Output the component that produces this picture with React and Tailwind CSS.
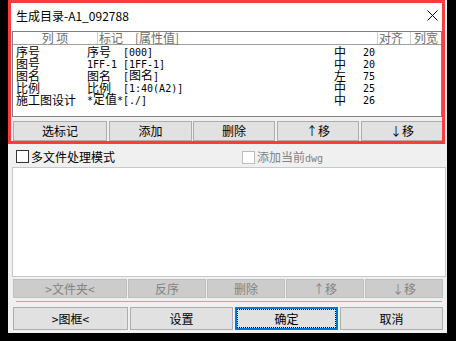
import React from "react";

const cjk = "font-['Noto_Sans_CJK_SC',sans-serif]";

function M({ children }) {
  return <span className="font-['DejaVu_Sans_Mono',monospace] text-[10px]">{children}</span>;
}

const rows = [
  { a: "序号", b: <>序号</>, c: <><M>[000]</M></>, d: "中", e: "20" },
  { a: "图号", b: <M>1FF-1</M>, c: <M>[1FF-1]</M>, d: "中", e: "20" },
  { a: "图名", b: <>图名</>, c: <><M>[</M>图名<M>]</M></>, d: "左", e: "75" },
  { a: "比例", b: <>比例</>, c: <M>[1:40(A2)]</M>, d: "中", e: "25" },
  { a: "施工图设计", b: <><M>*</M>定值<M>*</M></>, c: <M>[./]</M>, d: "中", e: "26" },
];

function Btn({ w, children, ml }) {
  return (
    <div className={`${w} ${ml} h-full bg-[#e1e1e1] border border-[#adadad] flex items-center justify-center text-[12px] text-black`}>
      {children}
    </div>
  );
}

function DBtn({ w, children, ml }) {
  return (
    <div className={`${w} ${ml} h-full bg-[#cccccc] border border-[#bfbfbf] flex items-center justify-center text-[12px] text-[#838383]`}>
      {children}
    </div>
  );
}

export default function App() {
  return (
    <div className={`relative w-[456px] h-[341px] bg-black overflow-hidden ${cjk} leading-[12px]`}>
      <div className="ml-[8px] w-[439px] h-[333px] bg-[#f0f0f0] flex flex-col">
        {/* title bar */}
        <div className="h-[31px] bg-white flex items-center justify-between pl-[8px] pr-[9px]">
          <span className="text-[12px] text-black">生成目录-A1_092788</span>
          <svg width="11" height="11" viewBox="0 0 11 11">
            <path d="M0.5 0.5 L10.5 10.5 M10.5 0.5 L0.5 10.5" stroke="#000" strokeWidth="1" />
          </svg>
        </div>
        {/* list panel */}
        <div className="ml-[4px] w-[430px] h-[86px] bg-white border border-[#828282] flex flex-col">
          <div className="h-[13px] flex border-b border-[#a0a0a0] text-[12px] text-[#6d6d6d]">
            <div className="w-[84px] flex items-center justify-center">列 项</div>
            <div className="w-px bg-[#d0d0d0]"></div>
            <div className="w-[279px] flex items-center pl-[1px]">
              <span>标记</span>
              <span className="ml-[12px]">[属性值]</span>
            </div>
            <div className="w-px bg-[#d0d0d0]"></div>
            <div className="w-[32px] flex items-center pl-[1px]">对齐</div>
            <div className="w-px bg-[#d0d0d0]"></div>
            <div className="flex-1 flex items-center pl-[3px]">列宽</div>
          </div>
          <div className="pt-[1px] pl-[3px] flex flex-col text-[12px] text-black">
            {rows.map((r, i) => (
              <div key={i} className="h-[12px] flex items-center leading-[12px]">
                <div className="w-[71px] whitespace-nowrap">{r.a}</div>
                <div className="w-[36px] whitespace-nowrap">{r.b}</div>
                <div className="w-[211px] whitespace-nowrap">{r.c}</div>
                <div className="w-[29px]">{r.d}</div>
                <div className="w-[30px]"><M>{r.e}</M></div>
              </div>
            ))}
          </div>
        </div>
        {/* buttons row 1 */}
        <div className="mt-[4px] h-[20px] flex pl-[5px]">
          <Btn w="w-[94px]" ml="">选标记</Btn>
          <Btn w="w-[83px]" ml="ml-[2px]">添加</Btn>
          <Btn w="w-[82px]" ml="ml-[1px]">删除</Btn>
          <Btn w="w-[82px]" ml="ml-[2px]">↑移</Btn>
          <Btn w="w-[82px]" ml="ml-[2px]">↓移</Btn>
        </div>
        {/* checkbox row */}
        <div className="h-[26px] flex items-start pt-[9px] pl-[8px] text-[12px]">
          <div className="w-[226px] flex items-center">
            <div className="w-[13px] h-[13px] bg-white border border-[#333333]"></div>
            <span className="ml-[2px] text-black leading-[13px]">多文件处理模式</span>
          </div>
          <div className="flex items-center">
            <div className="w-[13px] h-[13px] bg-white border border-[#bcbcbc]"></div>
            <span className="ml-[2px] text-[#838383] leading-[13px]">
              添加当前<M>dwg</M>
            </span>
          </div>
        </div>
        {/* big list */}
        <div className="ml-[4px] w-[434px] h-[110px] bg-white border border-[#c8c8c8]"></div>
        {/* disabled buttons */}
        <div className="mt-[2px] h-[19px] flex pl-[5px]">
          <DBtn w="w-[114px]" ml="">&gt;文件夹&lt;</DBtn>
          <DBtn w="w-[78px]" ml="ml-[1px]">反序</DBtn>
          <DBtn w="w-[78px]" ml="ml-[1px]">删除</DBtn>
          <DBtn w="w-[78px]" ml="ml-[1px]">↑移</DBtn>
          <DBtn w="w-[78px]" ml="ml-[1px]">↓移</DBtn>
        </div>
        {/* pink separator */}
        <div className="mt-[3px] ml-[8px] w-[426px] h-px bg-[#f08ca4]"></div>
        {/* bottom buttons */}
        <div className="mt-[5px] h-[23px] flex pl-[5px]">
          <Btn w="w-[115px]" ml="">&gt;图框&lt;</Btn>
          <Btn w="w-[103px]" ml="ml-[2px]">设置</Btn>
          <div className="ml-[2px] w-[103px] h-full bg-[#e1e1e1] border-2 border-[#0078d7] flex">
            <div className="flex-1 border border-dotted border-black flex items-center justify-center text-[12px] text-black">
              确定
            </div>
          </div>
          <Btn w="w-[103px]" ml="ml-[2px]">取消</Btn>
        </div>
      </div>
      {/* red annotation frame */}
      <div className="absolute left-[8px] top-0 w-[437px] h-[144px] border-[3px] border-[#ff3c3c] pointer-events-none"></div>
    </div>
  );
}
